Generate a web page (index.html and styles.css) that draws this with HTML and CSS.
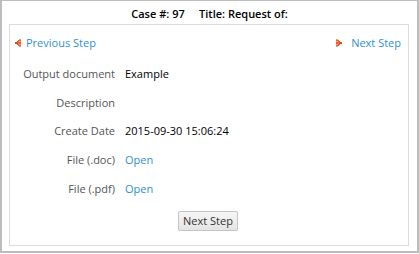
FILE: index.html
```html
<!DOCTYPE html>
<html lang="en">
<head>
    <meta charset="UTF-8">
    <meta name="viewport" content="width=device-width, initial-scale=1.0">
    <title>Output document</title>
    <link rel="stylesheet" href="styles.css">
</head>
<body>
    <div class="frame">
        <div class="case-title">Case #: 97&nbsp;&nbsp;&nbsp;&nbsp;&nbsp;Title: Request of:</div>
        <div class="box">
            <div class="nav">
                <a href="#" class="step-link">
                    <svg class="arrow" width="6" height="8" viewBox="0 0 6 8">
                        <rect x="4" y="0" width="2" height="1" fill="#f29a74"/>
                        <rect x="3" y="1" width="3" height="1" fill="#ec6434"/>
                        <rect x="2" y="2" width="2" height="1" fill="#e85a2c"/>
                        <rect x="4" y="2" width="2" height="1" fill="#f4a887"/>
                        <rect x="0" y="3" width="3" height="2" fill="#e2471e"/>
                        <rect x="3" y="3" width="1" height="2" fill="#f08050"/>
                        <rect x="4" y="3" width="2" height="2" fill="#e85a2c"/>
                        <rect x="2" y="5" width="2" height="1" fill="#e85a2c"/>
                        <rect x="4" y="5" width="2" height="1" fill="#f4a887"/>
                        <rect x="3" y="6" width="3" height="1" fill="#ec6434"/>
                        <rect x="4" y="7" width="2" height="1" fill="#f29a74"/>
                    </svg>Previous Step
                </a>
                <a href="#" class="step-link">
                    <svg class="arrow next" width="6" height="8" viewBox="0 0 6 8">
                        <rect x="0" y="0" width="2" height="1" fill="#f29a74"/>
                        <rect x="0" y="1" width="3" height="1" fill="#ec6434"/>
                        <rect x="0" y="2" width="2" height="1" fill="#f4a887"/>
                        <rect x="2" y="2" width="2" height="1" fill="#e85a2c"/>
                        <rect x="0" y="3" width="2" height="2" fill="#e85a2c"/>
                        <rect x="2" y="3" width="1" height="2" fill="#f08050"/>
                        <rect x="3" y="3" width="3" height="2" fill="#e2471e"/>
                        <rect x="0" y="5" width="2" height="1" fill="#f4a887"/>
                        <rect x="2" y="5" width="2" height="1" fill="#e85a2c"/>
                        <rect x="0" y="6" width="3" height="1" fill="#ec6434"/>
                        <rect x="0" y="7" width="2" height="1" fill="#f29a74"/>
                    </svg>Next Step
                </a>
            </div>

            <div class="details">
                <div class="label">Output document</div>
                <div class="value">Example</div>

                <div class="label">Description</div>
                <div class="value"></div>

                <div class="label">Create Date</div>
                <div class="value">2015-09-30 15:06:24</div>

                <div class="label">File (.doc)</div>
                <div class="value"><a href="#">Open</a></div>

                <div class="label">File (.pdf)</div>
                <div class="value"><a href="#">Open</a></div>
            </div>

            <div class="actions">
                <button class="btn">Next Step</button>
            </div>
        </div>
    </div>
</body>
</html>
```

FILE: styles.css
```css
body { margin: 0; font-family: "Open Sans", Arial, sans-serif; font-size: 11px; background: #fff; color: #000; }
.frame { height: 253px; box-sizing: border-box; border: 2px solid #bdbdbd; border-top-width: 1px; }
.case-title { height: 23px; line-height: 25px; text-align: center; color: #000; font-weight: 600; }
.box { width: 400px; box-sizing: border-box; margin-left: 7px; border: 1px solid #dcdcdc; padding: 10px 7px 14px 5px; }
.nav { display: flex; justify-content: space-between; line-height: 15px; }
.step-link { color: #2f8fd6; text-decoration: none; display: flex; align-items: center; }
.arrow { margin: 0 5px 0 0; }
.arrow.next { margin-right: 9px; }
.details { display: grid; grid-template-columns: 100px 1fr; column-gap: 10px; grid-auto-rows: 28.75px; align-items: center; margin-top: 9px; }
.label { text-align: right; color: #555; }
.value { color: #000; }
.value a { color: #2f8fd6; text-decoration: none; }
.actions { text-align: center; margin-top: 8px; }
.btn { font-family: "Open Sans", Arial, sans-serif; font-size: 11px; color: #333; height: 20px; padding: 0 4px; border: 1px solid #c4c4c4; border-radius: 2px; background: linear-gradient(#f6f6f6, #e4e4e4); }
```
